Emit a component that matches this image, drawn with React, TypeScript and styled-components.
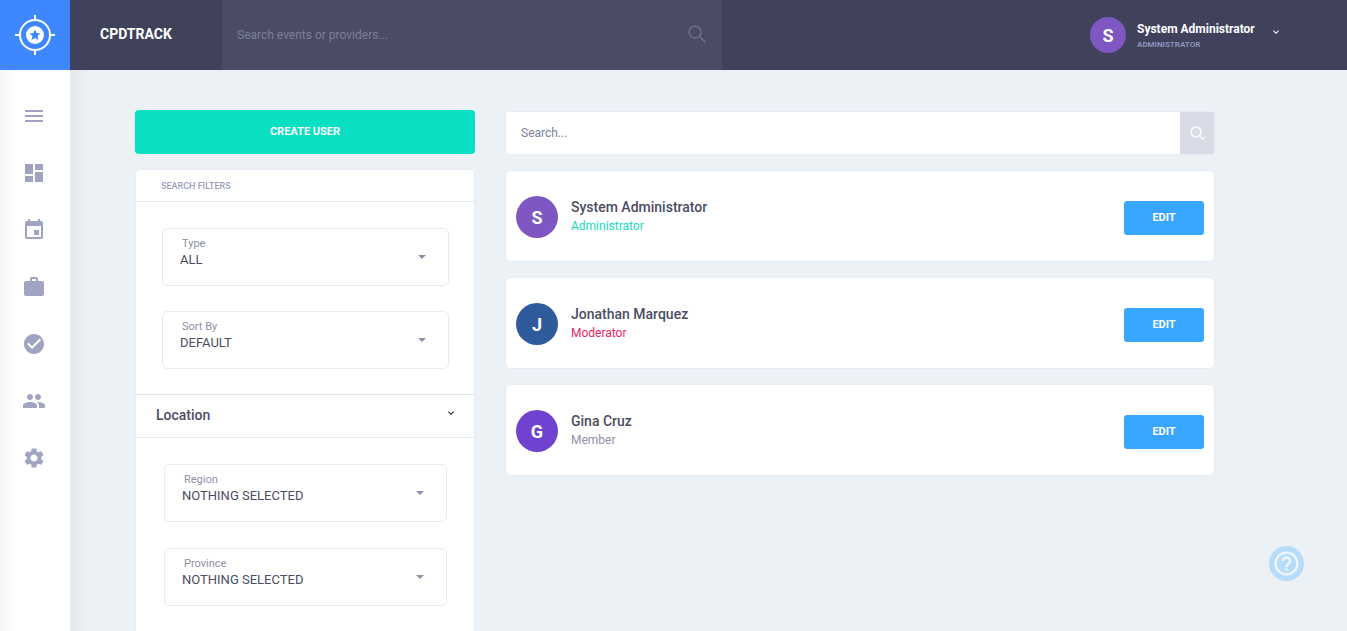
import styled, { createGlobalStyle } from 'styled-components'
import { MdMenu, MdDashboard, MdEvent, MdWork, MdCheckCircle, MdPeople, MdSettings, MdKeyboardArrowDown, MdHelpOutline } from 'react-icons/md'

const GlobalStyle = createGlobalStyle`
    html, body {
        margin: 0;
        height: 100%;
        overflow: hidden;
        background: #ecf1f5;
        font-family: Roboto, "Liberation Sans", sans-serif;
    }
    * {
        box-sizing: border-box;
    }
`

const Page = styled.div`
    height: 100vh;
    display: flex;
    flex-direction: column;
    overflow: hidden;
`

const TopBar = styled.header`
    height: 70px;
    flex: none;
    display: flex;
    background: #40415a;
`

const LogoBox = styled.div`
    width: 70px;
    display: flex;
    align-items: center;
    justify-content: center;
    background: #3f87ff;
`

const Brand = styled.div`
    width: 152px;
    padding-left: 30px;
    line-height: 68px;
    font-size: 14px;
    font-weight: 700;
    color: #fff;
`

const TopSearch = styled.div`
    width: 500px;
    display: flex;
    align-items: center;
    justify-content: space-between;
    padding: 0 16px 0 15px;
    background: #4a4b65;
    font-size: 12px;
    color: #7d7f9a;
    svg {
        margin-bottom: 3px;
    }
`

const UserMenu = styled.div`
    margin-left: 368px;
    display: flex;
    align-items: center;
    color: #fff;
`

const UserText = styled.div`
    margin-left: 11px;
    width: 133px;
`

const UserName = styled.div`
    font-size: 12px;
    line-height: 16px;
    font-weight: 700;
`

const UserRole = styled.div`
    margin-top: 3px;
    font-size: 8px;
    line-height: 10px;
    font-weight: 700;
    color: #8f92bb;
`

const Chevron = styled(MdKeyboardArrowDown)<{ $lift: number }>`
    margin-bottom: ${p => p.$lift}px;
`

const Body = styled.div`
    flex: 1;
    display: flex;
    min-height: 0;
`

const SideNav = styled.nav`
    width: 70px;
    flex: none;
    display: flex;
    flex-direction: column;
    align-items: center;
    gap: 27px;
    padding: 31px 2px 0 0;
    background: linear-gradient(90deg, #f3f5f6 0, #fff 16px);
`

const NavIcon = styled.div`
    width: 30px;
    height: 30px;
    display: flex;
    align-items: center;
    justify-content: center;
    color: #a0a3c2;
    font-size: 24px;
`

const Content = styled.main`
    flex: 1;
    display: flex;
    align-items: flex-start;
    gap: 30px;
    padding: 40px 0 0 65px;
    overflow: hidden;
    background: linear-gradient(90deg, #e4e8eb 0, #ecf1f5 20px);
`

const LeftColumn = styled.div`
    width: 340px;
    flex: none;
`

const CreateButton = styled.button`
    display: block;
    width: 100%;
    height: 44px;
    padding: 0 0 2px;
    border: 0;
    border-radius: 4px;
    background: #09dfc3;
    color: #fff;
    font-family: inherit;
    font-size: 11px;
    font-weight: 700;
`

const FilterCard = styled.div`
    margin-top: 15px;
    background: #fff;
    border: 1px solid #e6eaf2;
    border-radius: 5px 5px 0 0;
`

const FilterTitle = styled.div`
    height: 32px;
    padding: 10px 0 0 25px;
    border-bottom: 1px solid #e6eaf2;
    font-size: 9px;
    line-height: 12px;
    font-weight: 500;
    color: #9a9dc0;
`

const FilterGroup = styled.div<{ $inset: number; $gap: number }>`
    display: flex;
    flex-direction: column;
    gap: ${p => p.$gap}px;
    padding: 26px ${p => p.$inset - 1}px 25px ${p => p.$inset}px;
`

const SelectBox = styled.div`
    position: relative;
    height: 58px;
    padding: 7px 17px 0;
    border: 1px solid #e6eaf2;
    border-radius: 5px;
`

const SelectLabel = styled.div`
    padding-left: 2px;
    font-size: 11px;
    line-height: 15px;
    color: #8e90a6;
`

const SelectValue = styled.div`
    font-size: 13px;
    line-height: 17px;
    color: #4b4d63;
`

const Caret = styled.span`
    position: absolute;
    top: 26px;
    right: 22px;
    border-left: 4.5px solid transparent;
    border-right: 4.5px solid transparent;
    border-top: 4px solid #8e90a9;
`

const SectionHead = styled.div`
    height: 44px;
    display: flex;
    align-items: center;
    justify-content: space-between;
    padding: 0 17px 2px 20px;
    border-top: 1px solid #dfe3ea;
    border-bottom: 1px solid #e6eaf2;
    font-size: 14px;
    font-weight: 500;
    color: #4b4d63;
`

const RightColumn = styled.div`
    width: 710px;
    flex: none;
    display: flex;
    flex-direction: column;
    gap: 15px;
`

const SearchBar = styled.div`
    height: 44px;
    display: flex;
    margin-top: 1px;
    background: #fff;
    border: 1px solid #e6eaf2;
    border-radius: 3px;
    overflow: hidden;
`

const SearchText = styled.div`
    flex: 1;
    padding-left: 15px;
    line-height: 43px;
    font-size: 12px;
    color: #7d7f9a;
`

const SearchButton = styled.div`
    width: 34px;
    display: flex;
    align-items: center;
    justify-content: center;
    background: #d9dbe6;
`

const UserCard = styled.div`
    height: 92px;
    display: flex;
    align-items: center;
    padding: 2px 10px 0;
    background: #fff;
    border: 1px solid #e6eaf2;
    border-radius: 5px;
`

const Avatar = styled.div<{ $size: number; $bg: string }>`
    width: ${p => p.$size}px;
    height: ${p => p.$size}px;
    flex: none;
    display: flex;
    align-items: center;
    justify-content: center;
    border-radius: 50%;
    background: ${p => p.$bg};
    color: #fff;
    font-size: 18px;
    font-weight: 700;
`

const CardText = styled.div`
    flex: 1;
    margin-left: 13px;
    padding-bottom: 1px;
`

const CardName = styled.div`
    font-size: 14px;
    line-height: 18px;
    font-weight: 500;
    color: #4b4d63;
`

const CardRole = styled.div<{ $color: string }>`
    margin-top: 1px;
    font-size: 12px;
    line-height: 18px;
    color: ${p => p.$color};
`

const EditButton = styled.button`
    width: 80px;
    height: 34px;
    margin-top: 2px;
    padding: 0 0 2px;
    border: 0;
    border-radius: 3px;
    background: #38a6ff;
    color: #fff;
    font-family: inherit;
    font-size: 11px;
    font-weight: 700;
`

const HelpButton = styled.div`
    position: fixed;
    left: 1269px;
    top: 546px;
    width: 35px;
    height: 35px;
    display: flex;
    align-items: center;
    justify-content: center;
    border-radius: 50%;
    background: #b5dcfb;
    color: #f1f6fb;
    font-size: 29px;
`

const TargetLogo = () => (
    <svg width="40" height="40" viewBox="0 0 40 40" fill="none" stroke="#fff">
        <circle cx="20" cy="20" r="15" strokeWidth="2" />
        <path d="M20 0v6M20 34v6M0 20h6M34 20h6" strokeWidth="2" />
        <circle cx="20" cy="20" r="9" fill="#fff" stroke="none" />
        <path d="M20 14.5l1.6 3.6 3.9.4-2.9 2.6.8 3.9-3.4-2-3.4 2 .8-3.9-2.9-2.6 3.9-.4z" fill="#3f87ff" stroke="none" />
    </svg>
)

const PlainSearch = () => (
    <svg width="18" height="18" viewBox="0 0 18 18" fill="none" stroke="#6c6e8a" strokeWidth="1.6">
        <circle cx="7" cy="7" r="6" />
        <path d="M11.4 11.4l6 6" />
    </svg>
)

const HookSearch = () => (
    <svg width="15" height="15" viewBox="0 0 15 15" fill="none" stroke="#fff" strokeWidth="1.4">
        <circle cx="6" cy="6" r="5" />
        <path d="M9.6 9.6l2.4 2.8a1.3 1.3 0 0 0 2-1.6" />
    </svg>
)

const navIcons = [MdMenu, MdDashboard, MdEvent, MdWork, MdCheckCircle, MdPeople, MdSettings]

const users = [
    { name: 'System Administrator', role: 'Administrator', roleColor: '#14dcc0', initial: 'S', bg: '#7e57c2' },
    { name: 'Jonathan Marquez', role: 'Moderator', roleColor: '#f0245f', initial: 'J', bg: '#2f5b9c' },
    { name: 'Gina Cruz', role: 'Member', roleColor: '#8e90a6', initial: 'G', bg: '#6f42cf' },
]

const Select = ({ label, value }: { label: string; value: string }) => (
    <SelectBox>
        <SelectLabel>{label}</SelectLabel>
        <SelectValue>{value}</SelectValue>
        <Caret />
    </SelectBox>
)

const App = () => {
    return (
        <Page>
            <GlobalStyle />
            <TopBar>
                <LogoBox><TargetLogo /></LogoBox>
                <Brand>CPDTRACK</Brand>
                <TopSearch>
                    Search events or providers...
                    <PlainSearch />
                </TopSearch>
                <UserMenu>
                    <Avatar $size={36} $bg="#7e57c2">S</Avatar>
                    <UserText>
                        <UserName>System Administrator</UserName>
                        <UserRole>ADMINISTRATOR</UserRole>
                    </UserText>
                    <Chevron size={12} $lift={6} />
                </UserMenu>
            </TopBar>
            <Body>
                <SideNav>
                    {navIcons.map((Icon, i) => (
                        <NavIcon key={i}><Icon /></NavIcon>
                    ))}
                </SideNav>
                <Content>
                    <LeftColumn>
                        <CreateButton>CREATE USER</CreateButton>
                        <FilterCard>
                            <FilterTitle>SEARCH FILTERS</FilterTitle>
                            <FilterGroup $inset={26} $gap={25}>
                                <Select label="Type" value="ALL" />
                                <Select label="Sort By" value="DEFAULT" />
                            </FilterGroup>
                            <SectionHead>
                                Location
                                <Chevron size={12} color="#222" $lift={4} />
                            </SectionHead>
                            <FilterGroup $inset={28} $gap={26}>
                                <Select label="Region" value="NOTHING SELECTED" />
                                <Select label="Province" value="NOTHING SELECTED" />
                            </FilterGroup>
                        </FilterCard>
                    </LeftColumn>
                    <RightColumn>
                        <SearchBar>
                            <SearchText>Search...</SearchText>
                            <SearchButton><HookSearch /></SearchButton>
                        </SearchBar>
                        {users.map(user => (
                            <UserCard key={user.name}>
                                <Avatar $size={42} $bg={user.bg}>{user.initial}</Avatar>
                                <CardText>
                                    <CardName>{user.name}</CardName>
                                    <CardRole $color={user.roleColor}>{user.role}</CardRole>
                                </CardText>
                                <EditButton>EDIT</EditButton>
                            </UserCard>
                        ))}
                    </RightColumn>
                </Content>
            </Body>
            <HelpButton><MdHelpOutline /></HelpButton>
        </Page>
    )
}

export default App
